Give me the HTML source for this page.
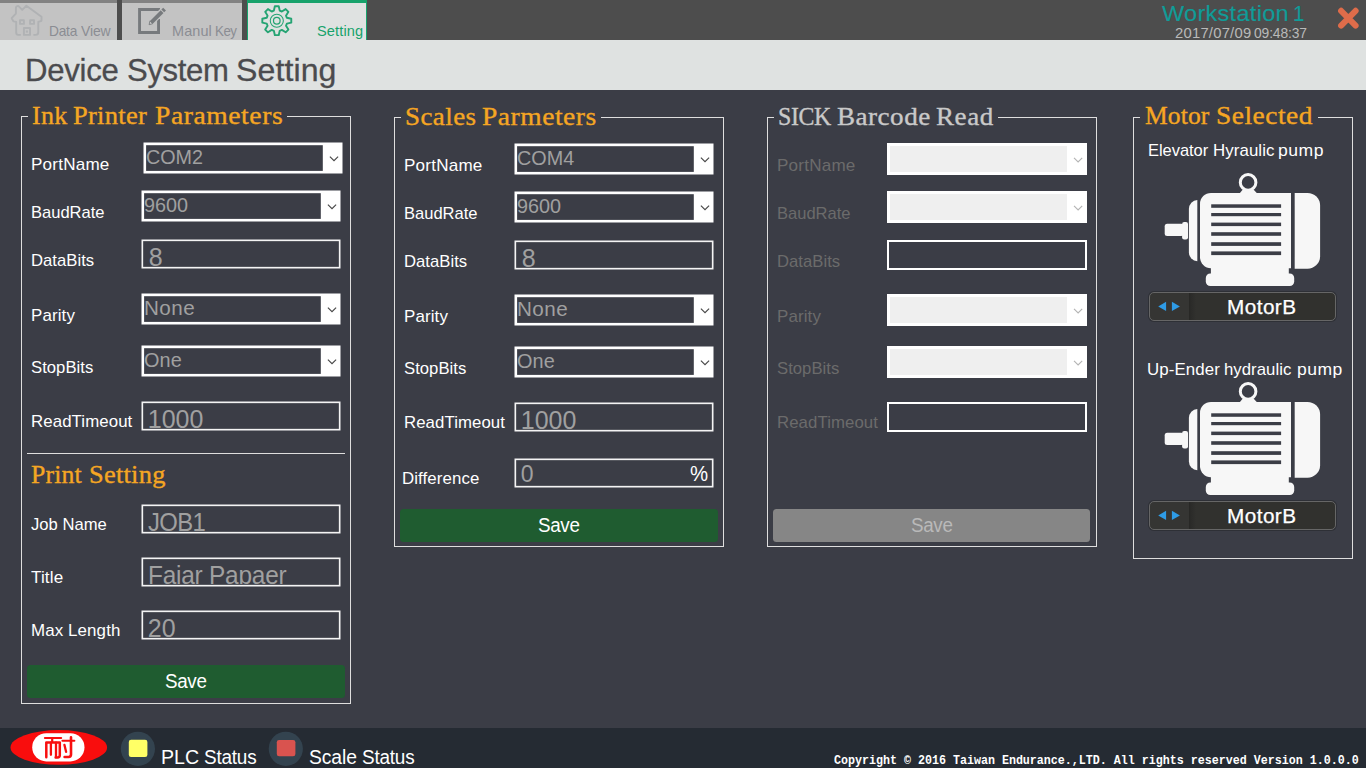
<!DOCTYPE html>
<html><head><meta charset="utf-8"><title>Device System Setting</title>
<style>
html,body{margin:0;padding:0;width:1366px;height:768px;overflow:hidden;background:#3b3d46;font-family:"Liberation Sans",sans-serif}
#r{position:relative;width:1366px;height:768px;overflow:hidden;background:#3b3d46}
#r div,#r svg,#r span.t{position:absolute;box-sizing:border-box}
span.t{white-space:pre;line-height:40px}
</style></head><body><div id="r">
<div style="left:0px;top:0px;width:1366px;height:40px;background:#4d4d4d"></div>
<div style="left:0px;top:0px;width:117px;height:40px;background:#c3c3c3;border-top:3px solid #828282"></div>
<div style="left:122px;top:0px;width:120px;height:40px;background:#c3c3c3;border-top:3px solid #828282"></div>
<div style="left:247px;top:0px;width:120px;height:40px;background:#dfe2e1;border:1px solid #17a26b;border-top:3px solid #17a26b;border-bottom:0"></div>
<div style="left:0px;top:40px;width:1366px;height:50px;background:#dfe2e1"></div>
<div style="left:0px;top:728px;width:1366px;height:40px;background:#252b33"></div>
<div style="left:21px;top:116px;width:330px;height:588px;border:1px solid #dedede;border-top:0"></div>
<div style="left:21px;top:116px;width:7px;height:1px;background:#dedede"></div>
<div style="left:287px;top:116px;width:64px;height:1px;background:#dedede"></div>
<div style="left:394px;top:117px;width:330px;height:430px;border:1px solid #dedede;border-top:0"></div>
<div style="left:394px;top:117px;width:7px;height:1px;background:#dedede"></div>
<div style="left:601px;top:117px;width:123px;height:1px;background:#dedede"></div>
<div style="left:767px;top:117px;width:330px;height:430px;border:1px solid #dedede;border-top:0"></div>
<div style="left:767px;top:117px;width:7px;height:1px;background:#dedede"></div>
<div style="left:998px;top:117px;width:99px;height:1px;background:#dedede"></div>
<div style="left:1133px;top:117px;width:220px;height:442px;border:1px solid #dedede;border-top:0"></div>
<div style="left:1133px;top:117px;width:7px;height:1px;background:#dedede"></div>
<div style="left:1318px;top:117px;width:35px;height:1px;background:#dedede"></div>
<div style="left:27px;top:453px;width:318px;height:1px;background:#dedede"></div>
<div style="left:27px;top:665px;width:318px;height:33px;background:#1f5c30;border-radius:3.5px"></div>
<div style="left:400px;top:509px;width:318px;height:33px;background:#1f5c30;border-radius:3.5px"></div>
<div style="left:773px;top:509px;width:317px;height:33px;background:#868686;border-radius:3.5px"></div>
<div style="left:1148px;top:291px;width:189px;height:31px;background:#2e3036;border-radius:6px"></div>
<div style="left:1149px;top:292px;width:187px;height:29px;background:linear-gradient(90deg,#353533 0,#353533 39px,#272725 39px,#2b2b29 41px,#31312e 46px,#31312e 100%);border:1px solid #666666;border-radius:5px"></div>
<div style="left:1148px;top:500px;width:189px;height:31px;background:#2e3036;border-radius:6px"></div>
<div style="left:1149px;top:501px;width:187px;height:29px;background:linear-gradient(90deg,#353533 0,#353533 39px,#272725 39px,#2b2b29 41px,#31312e 46px,#31312e 100%);border:1px solid #666666;border-radius:5px"></div>
<svg style="left:0;top:0" width="1366" height="768" viewBox="0 0 1366 768"><g fill="none" stroke="#b0b2b4" stroke-width="1.9" stroke-linejoin="round" stroke-linecap="butt">
<path d="M20.8 34.9 H18.2 Q16.2 34.9 16.2 32.6 V21.9 L13.4 21.4 L11.7 18.2 L15.9 13.6 V8 Q15.9 5.9 18.3 5.9 L22.2 9.9 L26.4 5.8 L41.5 16.8 V20.8 L38.3 21.9 V32 Q38.3 34.9 35.6 34.9 H33.4"/>
<rect x="20" y="20.2" width="3.9" height="3.7"/><rect x="30.1" y="20.2" width="3.9" height="3.7"/>
<rect x="23.9" y="28" width="6.1" height="6.9"/>
</g><rect x="25.8" y="30.5" width="2.1" height="2.1" fill="#b0b2b4"/>
<path d="M158.55 19 V32.45 H139.55 V9.55 H160" fill="none" stroke="#777a7d" stroke-width="2.9"/>
<path d="M150.4 23.2 L164 9.6" stroke="#c3c3c3" stroke-width="6.3"/>
<path d="M151.35 22.27 L162.1 11.52" stroke="#777a7d" stroke-width="3.9"/>
<path d="M162.75 10.87 L164.6 9.02" stroke="#777a7d" stroke-width="3.9"/>
<path d="M150.0 20.9 L152.7 23.7 L149.1 24.7 Z" fill="#c9c9c9" stroke="#777a7d" stroke-width="0.9" stroke-linejoin="round"/>
<g fill="none" stroke="#25a473" stroke-linejoin="round">
<path d="M274.86 6.23 L278.74 6.23 L279.73 10.62 L281.86 11.50 L285.66 9.09 L288.41 11.84 L286.00 15.64 L286.88 17.77 L291.27 18.76 L291.27 22.64 L286.88 23.63 L286.00 25.76 L288.41 29.56 L285.66 32.31 L281.86 29.90 L279.73 30.78 L278.74 35.17 L274.86 35.17 L273.87 30.78 L271.74 29.90 L267.94 32.31 L265.19 29.56 L267.60 25.76 L266.72 23.63 L262.33 22.64 L262.33 18.76 L266.72 17.77 L267.60 15.64 L265.19 11.84 L267.94 9.09 L271.74 11.50 L273.87 10.62Z" stroke-width="1.9"/>
<circle cx="276.8" cy="20.7" r="6.55" stroke-width="1.05"/>
<circle cx="276.8" cy="20.7" r="3.3" stroke-width="1.25"/>
</g>
<path d="M1341.1 10.8 L1355.6 25.6 M1355.6 10.8 L1341.1 25.6" stroke="#de6c4a" stroke-width="6" stroke-linecap="round"/>
<rect x="143.5" y="142.5" width="199" height="31" fill="#ffffff"/>
<rect x="146.1" y="145.2" width="176.7" height="25.7" fill="#3b3d46"/>
<path d="M329.9 156.7 L334 160.7 L338.1 156.7" fill="none" stroke="#484848" stroke-width="1.15"/>
<rect x="141.5" y="190.5" width="199" height="31" fill="#ffffff"/>
<rect x="144.1" y="193.2" width="176.7" height="25.7" fill="#3b3d46"/>
<path d="M327.9 204.7 L332 208.7 L336.1 204.7" fill="none" stroke="#484848" stroke-width="1.15"/>
<rect x="141.5" y="239.5" width="199" height="29" fill="#f4f4f4"/>
<rect x="143.15" y="241.15" width="195.7" height="25.7" fill="#3b3d46"/>
<rect x="141.5" y="293.5" width="199" height="31" fill="#ffffff"/>
<rect x="144.1" y="296.2" width="176.7" height="25.7" fill="#3b3d46"/>
<path d="M327.9 307.7 L332 311.7 L336.1 307.7" fill="none" stroke="#484848" stroke-width="1.15"/>
<rect x="141.5" y="345.5" width="199" height="31" fill="#ffffff"/>
<rect x="144.1" y="348.2" width="176.7" height="25.7" fill="#3b3d46"/>
<path d="M327.9 359.7 L332 363.7 L336.1 359.7" fill="none" stroke="#484848" stroke-width="1.15"/>
<rect x="141.5" y="401.5" width="199" height="29" fill="#f4f4f4"/>
<rect x="143.15" y="403.15" width="195.7" height="25.7" fill="#3b3d46"/>
<rect x="141.5" y="504.5" width="199" height="29" fill="#f4f4f4"/>
<rect x="143.15" y="506.15" width="195.7" height="25.7" fill="#3b3d46"/>
<rect x="141.5" y="557.5" width="199" height="29" fill="#f4f4f4"/>
<rect x="143.15" y="559.15" width="195.7" height="25.7" fill="#3b3d46"/>
<rect x="141.5" y="610.5" width="199" height="29" fill="#f4f4f4"/>
<rect x="143.15" y="612.15" width="195.7" height="25.7" fill="#3b3d46"/>
<rect x="514.5" y="143.5" width="199" height="31" fill="#ffffff"/>
<rect x="517.1" y="146.2" width="176.7" height="25.7" fill="#3b3d46"/>
<path d="M700.9 157.7 L705 161.7 L709.1 157.7" fill="none" stroke="#484848" stroke-width="1.15"/>
<rect x="514.5" y="191.5" width="199" height="31" fill="#ffffff"/>
<rect x="517.1" y="194.2" width="176.7" height="25.7" fill="#3b3d46"/>
<path d="M700.9 205.7 L705 209.7 L709.1 205.7" fill="none" stroke="#484848" stroke-width="1.15"/>
<rect x="514.5" y="240.5" width="199" height="29" fill="#f4f4f4"/>
<rect x="516.15" y="242.15" width="195.7" height="25.7" fill="#3b3d46"/>
<rect x="514.5" y="294.5" width="199" height="31" fill="#ffffff"/>
<rect x="517.1" y="297.2" width="176.7" height="25.7" fill="#3b3d46"/>
<path d="M700.9 308.7 L705 312.7 L709.1 308.7" fill="none" stroke="#484848" stroke-width="1.15"/>
<rect x="514.5" y="346.5" width="199" height="31" fill="#ffffff"/>
<rect x="517.1" y="349.2" width="176.7" height="25.7" fill="#3b3d46"/>
<path d="M700.9 360.7 L705 364.7 L709.1 360.7" fill="none" stroke="#484848" stroke-width="1.15"/>
<rect x="514.5" y="402.5" width="199" height="29" fill="#f4f4f4"/>
<rect x="516.15" y="404.15" width="195.7" height="25.7" fill="#3b3d46"/>
<rect x="514.5" y="458.5" width="199" height="29" fill="#f4f4f4"/>
<rect x="516.15" y="460.15" width="195.7" height="25.7" fill="#3b3d46"/>
<rect x="887" y="143" width="200" height="32" fill="#ffffff"/>
<rect x="890" y="146" width="177" height="26" fill="#efefef"/>
<path d="M1074 157.85 L1078.1 161.85 L1082.2 157.85" fill="none" stroke="#b4b4b4" stroke-width="1.15"/>
<rect x="887" y="191" width="200" height="32" fill="#ffffff"/>
<rect x="890" y="194" width="177" height="26" fill="#efefef"/>
<path d="M1074 205.85 L1078.1 209.85 L1082.2 205.85" fill="none" stroke="#b4b4b4" stroke-width="1.15"/>
<rect x="887" y="240" width="200" height="30" fill="#ffffff"/>
<rect x="889" y="242" width="196" height="26" fill="#3b3d46"/>
<rect x="887" y="294" width="200" height="32" fill="#ffffff"/>
<rect x="890" y="297" width="177" height="26" fill="#efefef"/>
<path d="M1074 308.85 L1078.1 312.85 L1082.2 308.85" fill="none" stroke="#b4b4b4" stroke-width="1.15"/>
<rect x="887" y="346" width="200" height="32" fill="#ffffff"/>
<rect x="890" y="349" width="177" height="26" fill="#efefef"/>
<path d="M1074 360.85 L1078.1 364.85 L1082.2 360.85" fill="none" stroke="#b4b4b4" stroke-width="1.15"/>
<rect x="887" y="402" width="200" height="30" fill="#ffffff"/>
<rect x="889" y="404" width="196" height="26" fill="#3b3d46"/>
<g transform="translate(0,0)"><g fill="#f7f7f7">
<circle cx="1248.1" cy="182.4" r="7.8" fill="none" stroke="#f7f7f7" stroke-width="3"/>
<path d="M1239.5 193.5 L1243 189.3 H1253.2 L1257.2 193.5 Z"/>
<path d="M1211 192.9 H1291 V268.3 H1211 A11 11 0 0 1 1200 257.3 V203.9 A11 11 0 0 1 1211 192.9 Z"/>
<path d="M1197.3 200 V261.2 A8.4 9 0 0 1 1188.9 252.2 V209 A8.4 9 0 0 1 1197.3 200 Z"/>
<rect x="1164.7" y="223.8" width="19" height="12.3" rx="2.5"/>
<rect x="1182.1" y="222.1" width="5.9" height="17.4" rx="2"/>
<path d="M1294.7 192.9 H1307.5 A12.6 12.6 0 0 1 1320.1 205.5 V256.2 A12.6 12.6 0 0 1 1307.5 268.8 H1294.7 Z"/>
<rect x="1210.9" y="266" width="77.9" height="10"/>
<rect x="1205.8" y="273.4" width="88.4" height="12.7" rx="4.5"/>
</g>
<g fill="#3b3d46">
<rect x="1211.2" y="204.3" width="69.9" height="3.5"/>
<rect x="1211.2" y="213.0" width="69.9" height="3.2"/>
<rect x="1211.2" y="222.6" width="69.9" height="3.5"/>
<rect x="1211.2" y="232.2" width="69.9" height="3.6"/>
<rect x="1211.2" y="242.2" width="69.9" height="3.7"/>
<rect x="1211.2" y="251.4" width="69.9" height="3.7"/>
</g></g>
<path d="M1158.2 306.45 L1166.1 301.8 V311.1 Z M1179.9 306.45 L1171.9 301.8 V311.1 Z" fill="#2e9be6"/>
<g transform="translate(0,209)"><g fill="#f7f7f7">
<circle cx="1248.1" cy="182.4" r="7.8" fill="none" stroke="#f7f7f7" stroke-width="3"/>
<path d="M1239.5 193.5 L1243 189.3 H1253.2 L1257.2 193.5 Z"/>
<path d="M1211 192.9 H1291 V268.3 H1211 A11 11 0 0 1 1200 257.3 V203.9 A11 11 0 0 1 1211 192.9 Z"/>
<path d="M1197.3 200 V261.2 A8.4 9 0 0 1 1188.9 252.2 V209 A8.4 9 0 0 1 1197.3 200 Z"/>
<rect x="1164.7" y="223.8" width="19" height="12.3" rx="2.5"/>
<rect x="1182.1" y="222.1" width="5.9" height="17.4" rx="2"/>
<path d="M1294.7 192.9 H1307.5 A12.6 12.6 0 0 1 1320.1 205.5 V256.2 A12.6 12.6 0 0 1 1307.5 268.8 H1294.7 Z"/>
<rect x="1210.9" y="266" width="77.9" height="10"/>
<rect x="1205.8" y="273.4" width="88.4" height="12.7" rx="4.5"/>
</g>
<g fill="#3b3d46">
<rect x="1211.2" y="204.3" width="69.9" height="3.5"/>
<rect x="1211.2" y="213.0" width="69.9" height="3.2"/>
<rect x="1211.2" y="222.6" width="69.9" height="3.5"/>
<rect x="1211.2" y="232.2" width="69.9" height="3.6"/>
<rect x="1211.2" y="242.2" width="69.9" height="3.7"/>
<rect x="1211.2" y="251.4" width="69.9" height="3.7"/>
</g></g>
<path d="M1158.2 515.45 L1166.1 510.8 V520.1 Z M1179.9 515.45 L1171.9 510.8 V520.1 Z" fill="#2e9be6"/>
<ellipse cx="58.8" cy="747.4" rx="48.3" ry="17.3" fill="#f90d0d"/>
<rect x="32.2" y="733.2" width="52.3" height="28.2" rx="14.1" fill="#fff"/>
<g stroke="#f80f0f" fill="none" stroke-linecap="round" stroke-linejoin="round">
<path d="M44.9 737.9 H61.2" stroke-width="2"/>
<path d="M52.2 738 V742" stroke-width="2.2"/>
<path d="M46.3 757.3 V742.4 H59.8 V755.3 Q59.8 757.4 57.5 757.4 H55.6" stroke-width="2.5"/>
<path d="M50.9 742.6 V754.8 M56 742.6 V757" stroke-width="2.3"/>
<path d="M62.4 740.8 H74.4" stroke-width="2"/>
<path d="M71 737.2 V754.6 Q71 757 68.6 757 H64.6" stroke-width="2.6"/>
<path d="M64.4 744.8 L66.1 751.8" stroke-width="2.3"/>
</g>
<circle cx="137.9" cy="748.8" r="17.1" fill="#33434f"/>
<rect x="128.8" y="739.7" width="18.6" height="17.4" rx="2.3" fill="#ffff66"/>
<circle cx="285.8" cy="748.8" r="17.1" fill="#33434f"/>
<rect x="276.8" y="739.9" width="18.6" height="16.4" rx="2.3" fill="#d9534f"/></svg>
<span class="t" style="left:49.02px;top:11px;font-size:14.2px;color:#8b8d93;letter-spacing:-0.224px;transform-origin:0 0;transform:scaleX(0.9667);">Data</span>
<span class="t" style="left:81.46px;top:11px;font-size:14.2px;color:#8b8d93;letter-spacing:-0.118px;transform-origin:0 0;transform:scaleX(0.9833);">View</span>
<span class="t" style="left:171.77px;top:11px;font-size:14.2px;color:#8b8d93;letter-spacing:0.112px;transform-origin:0 0;transform:scaleX(1.0185);">Manul</span>
<span class="t" style="left:215.24px;top:11px;font-size:14.2px;color:#8b8d93;letter-spacing:-0.512px;transform-origin:0 0;transform:scaleX(0.9384);">Key</span>
<span class="t" style="left:316.67px;top:11px;font-size:14.2px;color:#17a26b;letter-spacing:0.125px;transform-origin:0 0;transform:scaleX(1.0272);">Setting</span>
<span class="t" style="left:24.75px;top:50px;font-size:31.8px;color:#4b4b4e;letter-spacing:-0.269px;-webkit-text-stroke:0.3px #4b4b4e;transform-origin:0 0;transform:scaleX(0.9790);">Device</span>
<span class="t" style="left:126.53px;top:50px;font-size:31.8px;color:#4b4b4e;letter-spacing:-0.330px;-webkit-text-stroke:0.3px #4b4b4e;transform-origin:0 0;transform:scaleX(0.9766);">System</span>
<span class="t" style="left:236.30px;top:50px;font-size:31.8px;color:#4b4b4e;letter-spacing:0.093px;-webkit-text-stroke:0.3px #4b4b4e;transform-origin:0 0;transform:scaleX(1.0088);">Setting</span>
<span class="t" style="left:1161.51px;top:-6px;font-size:22.5px;color:#109c98;letter-spacing:0.312px;-webkit-text-stroke:0.15px #109c98;transform-origin:0 0;transform:scaleX(1.0416);">Workstation</span>
<span class="t" style="left:1293.27px;top:-6px;font-size:22.5px;color:#109c98;-webkit-text-stroke:0.15px #109c98;transform-origin:0 0;transform:scaleX(0.9090);">1</span>
<span class="t" style="left:1174.90px;top:13px;font-size:14.2px;color:#b9b9b9;letter-spacing:0.217px;transform-origin:0 0;transform:scaleX(1.0438);">2017/07/09</span>
<span class="t" style="left:1254.18px;top:13px;font-size:14.2px;color:#b9b9b9;letter-spacing:-0.128px;transform-origin:0 0;transform:scaleX(0.9760);">09:48:37</span>
<span class="t" style="left:31.53px;top:96px;font-size:25px;color:#f5a623;letter-spacing:0.266px;font-family:'Liberation Serif';-webkit-text-stroke:0.35px #f5a623;transform-origin:0 0;transform:scaleX(1.0393);">Ink</span>
<span class="t" style="left:73.35px;top:96px;font-size:25px;color:#f5a623;letter-spacing:0.270px;font-family:'Liberation Serif';-webkit-text-stroke:0.35px #f5a623;transform-origin:0 0;transform:scaleX(1.0591);">Printer</span>
<span class="t" style="left:155.23px;top:96px;font-size:25px;color:#f5a623;letter-spacing:0.497px;font-family:'Liberation Serif';-webkit-text-stroke:0.35px #f5a623;transform-origin:0 0;transform:scaleX(1.1049);">Parameters</span>
<span class="t" style="left:404.83px;top:97px;font-size:25px;color:#f5a623;letter-spacing:0.392px;font-family:'Liberation Serif';-webkit-text-stroke:0.35px #f5a623;transform-origin:0 0;transform:scaleX(1.0790);">Scales</span>
<span class="t" style="left:481.83px;top:97px;font-size:25px;color:#f5a623;letter-spacing:0.483px;font-family:'Liberation Serif';-webkit-text-stroke:0.35px #f5a623;transform-origin:0 0;transform:scaleX(1.1003);">Parmeters</span>
<span class="t" style="left:777.76px;top:97px;font-size:25px;color:#c9c9c9;letter-spacing:-0.379px;font-family:'Liberation Serif';-webkit-text-stroke:0.35px #c9c9c9;transform-origin:0 0;transform:scaleX(0.9549);">SICK</span>
<span class="t" style="left:837.30px;top:97px;font-size:25px;color:#c9c9c9;letter-spacing:0.458px;font-family:'Liberation Serif';-webkit-text-stroke:0.35px #c9c9c9;transform-origin:0 0;transform:scaleX(1.0836);">Barcode</span>
<span class="t" style="left:935.64px;top:97px;font-size:25px;color:#c9c9c9;letter-spacing:0.546px;font-family:'Liberation Serif';-webkit-text-stroke:0.35px #c9c9c9;transform-origin:0 0;transform:scaleX(1.0813);">Read</span>
<span class="t" style="left:1144.70px;top:96px;font-size:25px;color:#f5a623;letter-spacing:0.137px;font-family:'Liberation Serif';-webkit-text-stroke:0.35px #f5a623;transform-origin:0 0;transform:scaleX(1.0208);">Motor</span>
<span class="t" style="left:1216.22px;top:96px;font-size:25px;color:#f5a623;letter-spacing:0.455px;font-family:'Liberation Serif';-webkit-text-stroke:0.35px #f5a623;transform-origin:0 0;transform:scaleX(1.0969);">Selected</span>
<span class="t" style="left:30.91px;top:145px;font-size:16.6px;color:#ffffff;letter-spacing:0.198px;transform-origin:0 0;transform:scaleX(1.0292);">PortName</span>
<span class="t" style="left:30.84px;top:193px;font-size:16.6px;color:#ffffff;letter-spacing:-0.019px;transform-origin:0 0;transform:scaleX(0.9972);">BaudRate</span>
<span class="t" style="left:30.83px;top:241px;font-size:16.6px;color:#ffffff;letter-spacing:0.024px;transform-origin:0 0;transform:scaleX(1.0041);">DataBits</span>
<span class="t" style="left:30.81px;top:296px;font-size:16.6px;color:#ffffff;letter-spacing:0.115px;transform-origin:0 0;transform:scaleX(1.0214);">Parity</span>
<span class="t" style="left:30.76px;top:348px;font-size:16.6px;color:#ffffff;letter-spacing:0.028px;transform-origin:0 0;transform:scaleX(1.0048);">StopBits</span>
<span class="t" style="left:30.62px;top:402px;font-size:16.6px;color:#ffffff;letter-spacing:0.090px;transform-origin:0 0;transform:scaleX(1.0140);">ReadTimeout</span>
<span class="t" style="left:146.04px;top:137px;font-size:19.8px;color:#a0a0a0;letter-spacing:-0.021px;transform-origin:0 0;transform:scaleX(0.9983);">COM2</span>
<span class="t" style="left:144.07px;top:185px;font-size:19.8px;color:#a0a0a0;letter-spacing:0.006px;transform-origin:0 0;transform:scaleX(1.0006);">9600</span>
<div style="left:144px;top:242px;width:195px;height:24px;overflow:hidden"><span class="t" style="left:4.69px;top:-5px;font-size:25px;color:#a0a0a0;">8</span></div>
<span class="t" style="left:143.75px;top:288px;font-size:19.8px;color:#a0a0a0;letter-spacing:0.422px;transform-origin:0 0;transform:scaleX(1.0441);">None</span>
<span class="t" style="left:144.06px;top:340px;font-size:19.8px;color:#a0a0a0;letter-spacing:0.057px;transform-origin:0 0;transform:scaleX(1.0047);">One</span>
<div style="left:144px;top:404px;width:195px;height:24px;overflow:hidden"><span class="t" style="left:3.80px;top:-5px;font-size:25px;color:#a0a0a0;">1000</span></div>
<span class="t" style="left:31.07px;top:455px;font-size:25px;color:#f5a623;letter-spacing:0.149px;font-family:'Liberation Serif';-webkit-text-stroke:0.35px #f5a623;transform-origin:0 0;transform:scaleX(1.0295);">Print</span>
<span class="t" style="left:89.16px;top:455px;font-size:25px;color:#f5a623;letter-spacing:0.260px;font-family:'Liberation Serif';-webkit-text-stroke:0.35px #f5a623;transform-origin:0 0;transform:scaleX(1.0548);">Setting</span>
<span class="t" style="left:31.23px;top:505px;font-size:16.6px;color:#ffffff;letter-spacing:0.009px;transform-origin:0 0;transform:scaleX(1.0013);">Job Name</span>
<span class="t" style="left:31.33px;top:558px;font-size:16.6px;color:#ffffff;letter-spacing:0.133px;transform-origin:0 0;transform:scaleX(1.0271);">Title</span>
<span class="t" style="left:30.77px;top:611px;font-size:16.6px;color:#ffffff;letter-spacing:0.114px;transform-origin:0 0;transform:scaleX(1.0183);">Max Length</span>
<div style="left:144px;top:507px;width:195px;height:24px;overflow:hidden"><span class="t" style="left:3.56px;top:-5px;font-size:25px;color:#a0a0a0;letter-spacing:-0.644px;transform-origin:0 0;transform:scaleX(0.9545);">JOB1</span></div>
<div style="left:144px;top:560px;width:195px;height:24px;overflow:hidden"><span class="t" style="left:4.27px;top:-5px;font-size:25px;color:#a0a0a0;letter-spacing:-0.219px;transform-origin:0 0;transform:scaleX(0.9753);">Fajar Papaer</span></div>
<div style="left:144px;top:613px;width:195px;height:24px;overflow:hidden"><span class="t" style="left:3.84px;top:-5px;font-size:25px;color:#a0a0a0;">20</span></div>
<span class="t" style="left:164.82px;top:661px;font-size:19.5px;color:#ffffff;letter-spacing:-0.346px;transform-origin:0 0;transform:scaleX(0.9651);">Save</span>
<span class="t" style="left:403.91px;top:146px;font-size:16.6px;color:#ffffff;letter-spacing:0.198px;transform-origin:0 0;transform:scaleX(1.0292);">PortName</span>
<span class="t" style="left:403.84px;top:194px;font-size:16.6px;color:#ffffff;letter-spacing:-0.019px;transform-origin:0 0;transform:scaleX(0.9972);">BaudRate</span>
<span class="t" style="left:403.83px;top:242px;font-size:16.6px;color:#ffffff;letter-spacing:0.024px;transform-origin:0 0;transform:scaleX(1.0041);">DataBits</span>
<span class="t" style="left:403.81px;top:297px;font-size:16.6px;color:#ffffff;letter-spacing:0.115px;transform-origin:0 0;transform:scaleX(1.0214);">Parity</span>
<span class="t" style="left:403.76px;top:349px;font-size:16.6px;color:#ffffff;letter-spacing:0.028px;transform-origin:0 0;transform:scaleX(1.0048);">StopBits</span>
<span class="t" style="left:403.82px;top:403px;font-size:16.6px;color:#ffffff;letter-spacing:0.075px;transform-origin:0 0;transform:scaleX(1.0115);">ReadTimeout</span>
<span class="t" style="left:401.92px;top:459px;font-size:16.6px;color:#ffffff;letter-spacing:0.085px;transform-origin:0 0;transform:scaleX(1.0158);">Difference</span>
<span class="t" style="left:517.04px;top:138px;font-size:19.8px;color:#a0a0a0;transform-origin:0 0;transform:scaleX(1.0000);">COM4</span>
<span class="t" style="left:517.07px;top:186px;font-size:19.8px;color:#a0a0a0;letter-spacing:0.006px;transform-origin:0 0;transform:scaleX(1.0006);">9600</span>
<div style="left:517px;top:243px;width:195px;height:24px;overflow:hidden"><span class="t" style="left:4.69px;top:-5px;font-size:25px;color:#a0a0a0;">8</span></div>
<span class="t" style="left:516.75px;top:289px;font-size:19.8px;color:#a0a0a0;letter-spacing:0.422px;transform-origin:0 0;transform:scaleX(1.0441);">None</span>
<span class="t" style="left:517.06px;top:341px;font-size:19.8px;color:#a0a0a0;letter-spacing:0.057px;transform-origin:0 0;transform:scaleX(1.0047);">One</span>
<div style="left:517px;top:405px;width:195px;height:24px;overflow:hidden"><span class="t" style="left:3.80px;top:-5px;font-size:25px;color:#a0a0a0;">1000</span></div>
<div style="left:517px;top:461px;width:195px;height:24px;overflow:hidden"><span class="t" style="left:3.80px;top:-7px;font-size:23px;color:#a0a0a0;">0</span></div>
<span class="t" style="left:689.93px;top:454px;font-size:22px;color:#ffffff;transform-origin:0 0;transform:scaleX(0.9251);">%</span>
<span class="t" style="left:537.82px;top:505px;font-size:19.5px;color:#ffffff;letter-spacing:-0.346px;transform-origin:0 0;transform:scaleX(0.9651);">Save</span>
<span class="t" style="left:776.91px;top:146px;font-size:16.6px;color:#6b6b6b;letter-spacing:0.198px;transform-origin:0 0;transform:scaleX(1.0292);">PortName</span>
<span class="t" style="left:776.84px;top:194px;font-size:16.6px;color:#6b6b6b;letter-spacing:-0.019px;transform-origin:0 0;transform:scaleX(0.9972);">BaudRate</span>
<span class="t" style="left:776.83px;top:242px;font-size:16.6px;color:#6b6b6b;letter-spacing:0.024px;transform-origin:0 0;transform:scaleX(1.0041);">DataBits</span>
<span class="t" style="left:776.81px;top:297px;font-size:16.6px;color:#6b6b6b;letter-spacing:0.115px;transform-origin:0 0;transform:scaleX(1.0214);">Parity</span>
<span class="t" style="left:776.76px;top:349px;font-size:16.6px;color:#6b6b6b;letter-spacing:0.028px;transform-origin:0 0;transform:scaleX(1.0048);">StopBits</span>
<span class="t" style="left:776.82px;top:403px;font-size:16.6px;color:#6b6b6b;letter-spacing:0.075px;transform-origin:0 0;transform:scaleX(1.0115);">ReadTimeout</span>
<span class="t" style="left:910.82px;top:505px;font-size:19.5px;color:#b9b9b9;letter-spacing:-0.346px;transform-origin:0 0;transform:scaleX(0.9651);">Save</span>
<span class="t" style="left:1147.84px;top:131px;font-size:16.6px;color:#ffffff;letter-spacing:-0.037px;transform-origin:0 0;transform:scaleX(0.9935);">Elevator</span>
<span class="t" style="left:1213.02px;top:131px;font-size:16.6px;color:#ffffff;letter-spacing:0.083px;transform-origin:0 0;transform:scaleX(1.0152);">Hyraulic</span>
<span class="t" style="left:1277.57px;top:131px;font-size:16.6px;color:#ffffff;letter-spacing:0.490px;transform-origin:0 0;transform:scaleX(1.0580);">pump</span>
<span class="t" style="left:1146.52px;top:350px;font-size:16.6px;color:#ffffff;letter-spacing:0.101px;transform-origin:0 0;transform:scaleX(1.0154);">Up-Ender</span>
<span class="t" style="left:1224.38px;top:350px;font-size:16.6px;color:#ffffff;letter-spacing:0.042px;transform-origin:0 0;transform:scaleX(1.0078);">hydraulic</span>
<span class="t" style="left:1297.17px;top:350px;font-size:16.6px;color:#ffffff;letter-spacing:0.454px;transform-origin:0 0;transform:scaleX(1.0535);">pump</span>
<span class="t" style="left:1227.36px;top:287px;font-size:19.6px;color:#ffffff;letter-spacing:0.435px;-webkit-text-stroke:0.25px #ffffff;transform-origin:0 0;transform:scaleX(1.0562);">MotorB</span>
<span class="t" style="left:1227.36px;top:496px;font-size:19.6px;color:#ffffff;letter-spacing:0.435px;-webkit-text-stroke:0.25px #ffffff;transform-origin:0 0;transform:scaleX(1.0562);">MotorB</span>
<span class="t" style="left:160.66px;top:737px;font-size:19.5px;color:#ffffff;letter-spacing:0.041px;transform-origin:0 0;transform:scaleX(1.0035);">PLC</span>
<span class="t" style="left:204.22px;top:737px;font-size:19.5px;color:#ffffff;letter-spacing:-0.215px;transform-origin:0 0;transform:scaleX(0.9711);">Status</span>
<span class="t" style="left:308.90px;top:737px;font-size:19.5px;color:#ffffff;letter-spacing:-0.088px;transform-origin:0 0;transform:scaleX(0.9889);">Scale</span>
<span class="t" style="left:362.22px;top:737px;font-size:19.5px;color:#ffffff;letter-spacing:-0.215px;transform-origin:0 0;transform:scaleX(0.9711);">Status</span>
<span class="t" style="left:834.36px;top:741px;font-size:12px;color:#ffffff;font-family:'Liberation Mono';font-weight:700;transform-origin:0 0;transform:scaleX(0.9714);">Copyright © 2016 Taiwan Endurance.,LTD. All rights reserved Version 1.0.0.0</span>
</div></body></html>
